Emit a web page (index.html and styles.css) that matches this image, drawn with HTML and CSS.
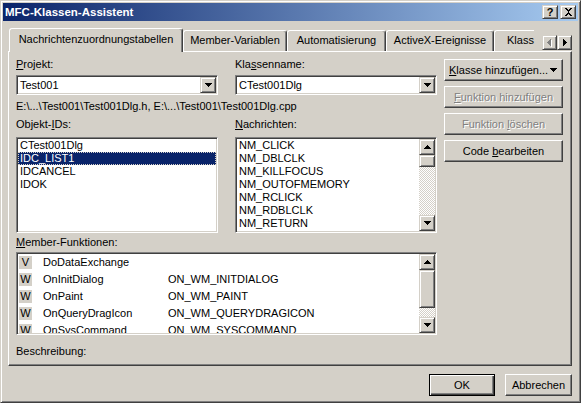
FILE: index.html
```html
<!DOCTYPE html>
<html lang="de">
<head>
  <meta charset="UTF-8">
  <title>MFC-Klassen-Assistent</title>
  <link rel="stylesheet" href="styles.css">
</head>
<body>

<div class="window">
  <div class="titlebar">
    <span class="title">MFC-Klassen-Assistent</span>
    <div class="caption-buttons">
      <span class="cap-btn">?</span>
      <span class="cap-btn">
        <svg width="9" height="8" viewBox="0 0 9 8"><path d="M1 0h2v1h1v1h1v-1h1v-1h2v1h-1v1h-1v1h-1v2h1v1h1v1h1v1h-2v-1h-1v-1h-1v1h-1v1h-2v-1h1v-1h1v-1h1v-2h-1v-1h-1v-1h-1z" fill="#000"/></svg>
      </span>
    </div>
  </div>

  <div class="dialog">
    <div class="tabs">
      <div class="tab active tab-nach">Nachrichtenzuordnungstabellen</div>
      <div class="tab tab-member">Member-Variablen</div>
      <div class="tab tab-auto">Automatisierung</div>
      <div class="tab tab-activex">ActiveX-Ereignisse</div>
      <div class="tab tab-cut">Klass</div>
      <div class="tab-scroll">
        <span class="tab-arrow">
          <svg width="5" height="8" viewBox="0 0 5 8">
            <path d="M4 1h1v7h-1z M3 2h1v5h-1z M2 3h1v3h-1z M1 4h1v1h-1z" fill="#fff"/>
            <path d="M3 0h1v7h-1z M2 1h1v5h-1z M1 2h1v3h-1z M0 3h1v1h-1z" fill="#808080"/>
          </svg>
        </span>
        <span class="tab-arrow">
          <svg width="4" height="7" viewBox="0 0 4 7"><path d="M0 0h1v7h-1z M1 1h1v5h-1z M2 2h1v3h-1z M3 3h1v1h-1z" fill="#000"/></svg>
        </span>
      </div>
    </div>

    <div class="panel">
      <div class="main">
        <div class="pair">
          <div class="field">
            <div class="label"><u>P</u>rojekt:</div>
            <div class="combo">
              <span class="combo-text">Test001</span>
              <span class="combo-btn"><svg width="7" height="4" viewBox="0 0 7 4"><path d="M0 0h7v1h-7z M1 1h5v1h-5z M2 2h3v1h-3z M3 3h1v1h-1z" fill="#000"/></svg></span>
            </div>
          </div>
          <div class="field">
            <div class="label">Kla<u>s</u>senname:</div>
            <div class="combo">
              <span class="combo-text">CTest001Dlg</span>
              <span class="combo-btn"><svg width="7" height="4" viewBox="0 0 7 4"><path d="M0 0h7v1h-7z M1 1h5v1h-5z M2 2h3v1h-3z M3 3h1v1h-1z" fill="#000"/></svg></span>
            </div>
          </div>
        </div>

        <div class="path">E:\...\Test001\Test001Dlg.h, E:\...\Test001\Test001Dlg.cpp</div>

        <div class="pair lists">
          <div class="field">
            <div class="label">Objekt-<u>I</u>Ds:</div>
            <div class="listbox ids">
              <div class="items">
                <div class="item">CTest001Dlg</div>
                <div class="item selected">IDC_LIST1</div>
                <div class="item">IDCANCEL</div>
                <div class="item">IDOK</div>
              </div>
            </div>
          </div>
          <div class="field">
            <div class="label"><u>N</u>achrichten:</div>
            <div class="listbox ids">
              <div class="items">
                <div class="item">NM_CLICK</div>
                <div class="item">NM_DBLCLK</div>
                <div class="item">NM_KILLFOCUS</div>
                <div class="item">NM_OUTOFMEMORY</div>
                <div class="item">NM_RCLICK</div>
                <div class="item">NM_RDBLCLK</div>
                <div class="item">NM_RETURN</div>
              </div>
              <div class="vscroll">
                <span class="sb-btn"><svg width="7" height="4" viewBox="0 0 7 4"><path d="M3 0h1v1h-1z M2 1h3v1h-3z M1 2h5v1h-5z M0 3h7v1h-7z" fill="#000"/></svg></span>
                <span class="sb-thumb thumb-small"></span>
                <span class="sb-track"></span>
                <span class="sb-btn"><svg width="7" height="4" viewBox="0 0 7 4"><path d="M0 0h7v1h-7z M1 1h5v1h-5z M2 2h3v1h-3z M3 3h1v1h-1z" fill="#000"/></svg></span>
              </div>
            </div>
          </div>
        </div>

        <div class="label member-label"><u>M</u>ember-Funktionen:</div>
        <div class="listbox members">
          <div class="rows">
            <div class="row"><span class="kind">V</span><span class="fn">DoDataExchange</span><span class="msg"></span></div>
            <div class="row"><span class="kind">W</span><span class="fn">OnInitDialog</span><span class="msg">ON_WM_INITDIALOG</span></div>
            <div class="row"><span class="kind">W</span><span class="fn">OnPaint</span><span class="msg">ON_WM_PAINT</span></div>
            <div class="row"><span class="kind">W</span><span class="fn">OnQueryDragIcon</span><span class="msg">ON_WM_QUERYDRAGICON</span></div>
            <div class="row"><span class="kind">W</span><span class="fn">OnSysCommand</span><span class="msg">ON_WM_SYSCOMMAND</span></div>
          </div>
          <div class="vscroll">
            <span class="sb-btn"><svg width="7" height="4" viewBox="0 0 7 4"><path d="M3 0h1v1h-1z M2 1h3v1h-3z M1 2h5v1h-5z M0 3h7v1h-7z" fill="#000"/></svg></span>
            <span class="sb-thumb thumb-big"></span>
            <span class="sb-track"></span>
            <span class="sb-btn"><svg width="7" height="4" viewBox="0 0 7 4"><path d="M0 0h7v1h-7z M1 1h5v1h-5z M2 2h3v1h-3z M3 3h1v1h-1z" fill="#000"/></svg></span>
          </div>
        </div>

        <div class="label desc">Beschreibung:</div>
      </div>

      <div class="side">
        <button class="btn btn-menu"><span><u>K</u>lasse hinzufügen...</span><svg width="7" height="4" viewBox="0 0 7 4"><path d="M0 0h7v1h-7z M1 1h5v1h-5z M2 2h3v1h-3z M3 3h1v1h-1z" fill="#000"/></svg></button>
        <button class="btn disabled"><u>F</u>unktion hinzufügen</button>
        <button class="btn disabled">Funktion <u>l</u>öschen</button>
        <button class="btn">Code <u>b</u>earbeiten</button>
      </div>
    </div>

    <div class="footer">
      <button class="btn btn-default">OK</button>
      <button class="btn btn-cancel">Abbrechen</button>
    </div>
  </div>
</div>

</body>
</html>
```

FILE: styles.css
```css
body {
  margin: 0;
  background: #d4d0c8;
  font-family: "Liberation Sans", Arial, sans-serif;
  font-size: 11px;
  line-height: 13px;
  color: #000;
}

/* Fensterrahmen */
.window {
  width: 581px;
  height: 403px;
  box-sizing: border-box;
  padding: 2px;
  background: #d4d0c8;
  border: 1px solid;
  border-color: #d4d0c8 #404040 #404040 #d4d0c8;
  box-shadow: inset 1px 1px #fff, inset -1px -1px #808080;
}

.titlebar {
  display: flex;
  align-items: center;
  height: 18px;
  padding: 0 2px;
  background: linear-gradient(to right, #0a246a, #a6caf0);
}

.title {
  color: #fff;
  font-weight: bold;
  font-size: 11.5px;
  line-height: 18px;
}

.caption-buttons {
  margin-left: auto;
  display: flex;
  gap: 2px;
}

/* erhabene Elemente: Titelknoepfe, Scrollbars, Combo-Pfeil */
.cap-btn,
.sb-btn,
.sb-thumb,
.combo-btn,
.tab-arrow {
  box-sizing: border-box;
  background: #d4d0c8;
  border: 1px solid;
  border-color: #d4d0c8 #404040 #404040 #d4d0c8;
  box-shadow: inset 1px 1px #fff, inset -1px -1px #808080;
  display: flex;
  align-items: center;
  justify-content: center;
}

.cap-btn {
  width: 16px;
  height: 14px;
  font-weight: bold;
  font-size: 11px;
  line-height: 12px;
}

.dialog {
  padding: 7px 6px 0 5px;
}

/* Reiter */
.tabs {
  display: flex;
  align-items: flex-end;
  height: 23px;
}

.tab {
  box-sizing: border-box;
  height: 21px;
  padding-top: 3px;
  border: 1px solid;
  border-bottom: 0;
  border-color: #fff #404040 transparent #fff;
  border-radius: 3px 3px 0 0;
  box-shadow: inset -1px 0 #808080;
  text-align: center;
  white-space: nowrap;
}

.tab.active {
  position: relative;
  z-index: 1;
  height: 24px;
  margin-bottom: -1px;
  padding-top: 4px;
  background: #d4d0c8;
}

.tab-nach { width: 174px; margin-left: 1px; }
.tab-member { width: 104px; }
.tab-auto { width: 99px; }
.tab-activex { width: 108px; }

.tab-cut {
  width: 40px;
  padding-left: 12px;
  text-align: left;
  border-right: 0;
  border-radius: 3px 0 0 0;
  box-shadow: none;
}

.tab-scroll {
  margin-left: auto;
  margin-bottom: 1px;
  display: flex;
}

.tab-arrow {
  width: 15px;
  height: 15px;
}

/* Registerkarte */
.panel {
  display: flex;
  box-sizing: border-box;
  height: 315px;
  padding: 6px 8px 0 7px;
  border: 1px solid;
  border-color: #fff #404040 #404040 #fff;
  box-shadow: inset -1px -1px #808080;
}

.main {
  width: 421px;
}

.side {
  width: 119px;
  margin-left: 7px;
  padding-top: 1px;
  display: flex;
  flex-direction: column;
  gap: 5px;
}

.pair {
  display: grid;
  grid-template-columns: 202px 202px;
  column-gap: 17px;
}

.label {
  white-space: nowrap;
}

.combo,
.listbox {
  box-sizing: border-box;
  background: #fff;
  border: 1px solid;
  border-color: #808080 #fff #fff #808080;
  box-shadow: inset 1px 1px #404040, inset -1px -1px #d4d0c8;
  padding: 1px;
}

.combo {
  margin-top: 4px;
  height: 20px;
  display: flex;
  align-items: center;
}

.combo-text {
  flex: 1;
  padding-left: 2px;
}

.combo-btn {
  width: 16px;
  height: 16px;
}

.path {
  margin-top: 5px;
  white-space: nowrap;
}

.lists {
  margin-top: 5px;
}

.listbox {
  display: flex;
  overflow: hidden;
}

.listbox.ids {
  margin-top: 6px;
  height: 96px;
}

.items {
  flex: 1;
}

.item {
  padding-left: 2px;
  height: 13px;
  white-space: nowrap;
}

.item.selected {
  background: #0a246a;
  color: #fff;
  outline: 1px dotted #d4d0c8;
  outline-offset: -1px;
}

.vscroll {
  width: 16px;
  display: flex;
  flex-direction: column;
}

.sb-btn {
  height: 16px;
  flex: none;
}

.thumb-small { height: 12px; flex: none; }
.thumb-big { height: 38px; flex: none; }

.sb-track {
  flex: 1;
  background: repeating-conic-gradient(#fff 0 25%, #d4d0c8 0 50%) 0 0 / 2px 2px;
}

.member-label {
  margin-top: 3px;
}

.listbox.members {
  margin-top: 3px;
  height: 83px;
}

.rows {
  flex: 1;
  overflow: hidden;
}

.row {
  display: grid;
  grid-template-columns: 25px 125px 1fr;
  align-items: center;
  height: 17px;
  white-space: nowrap;
}

.kind {
  width: 13px;
  height: 13px;
  margin-left: 1px;
  background: #d4d0c8;
  text-align: center;
}

.desc {
  margin-top: 10px;
}

/* Schaltflaechen */
.btn {
  box-sizing: border-box;
  height: 22px;
  padding: 0;
  font: inherit;
  color: #000;
  background: #d4d0c8;
  border: 1px solid;
  border-color: #fff #404040 #404040 #fff;
  box-shadow: inset -1px -1px #808080;
  text-align: center;
}

.btn.disabled {
  color: #808080;
  text-shadow: 1px 1px #fff;
}

.btn-menu {
  display: flex;
  align-items: center;
  justify-content: space-between;
  padding: 0 5px 0 4px;
}

.footer {
  display: flex;
  justify-content: flex-end;
  gap: 10px;
  margin-top: 8px;
}

.btn-default {
  width: 66px;
  border: 1px solid #000;
  box-shadow: inset 1px 1px #fff, inset -1px -1px #404040, inset -2px -2px #808080;
}

.btn-cancel {
  width: 67px;
}
```
